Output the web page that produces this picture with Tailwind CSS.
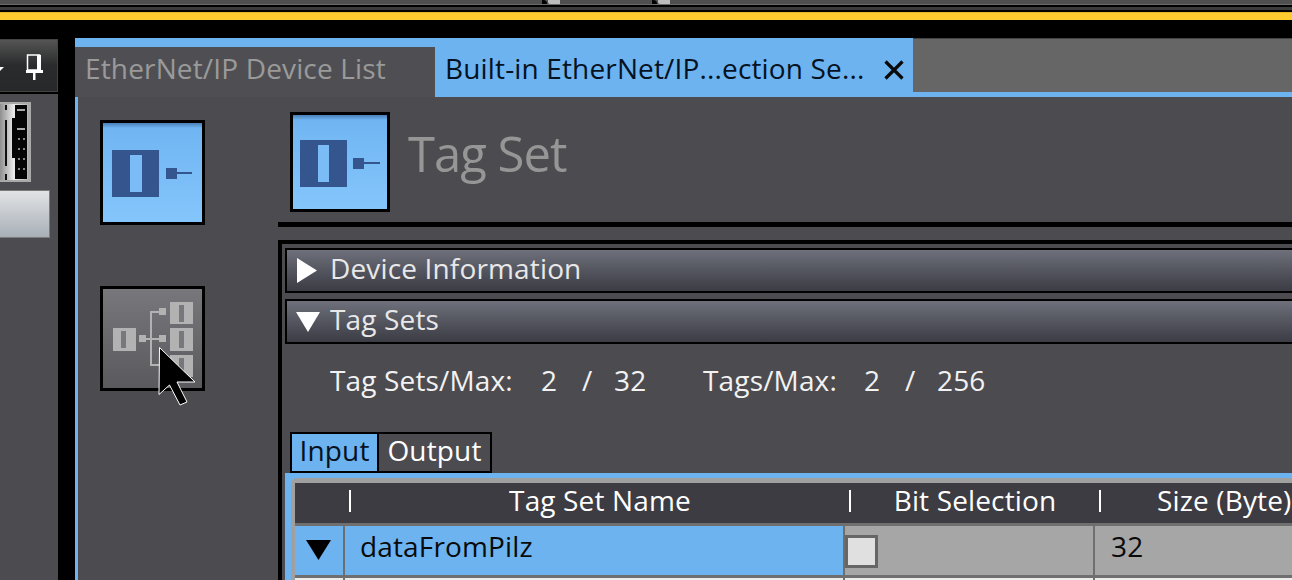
<!DOCTYPE html>
<html lang="en">
<head>
  <meta charset="UTF-8" />
  <title>Tag Set</title>
  <script src="https://cdn.jsdelivr.net/npm/@tailwindcss/browser@4"></script>
</head>
<body class="bg-black">
<div class="relative w-[1292px] h-[580px] overflow-hidden bg-black font-['Open_Sans',sans-serif] text-[28px] tracking-[0.15px]">

  <!-- Top window strip -->
  <div class="h-[12px] flex flex-col">
    <div class="h-[4px] flex bg-[#4f4f4f]">
      <div class="w-[542px]"></div>
      <div class="w-[5px] bg-black rounded-tr-[4px]"></div>
      <div class="w-px"></div>
      <div class="w-[12px] bg-[#bcbcbc] rounded-bl-[2px]"></div>
      <div class="w-[92px]"></div>
      <div class="w-[5px] bg-black rounded-tr-[4px]"></div>
      <div class="w-px"></div>
      <div class="w-[12px] bg-[#bcbcbc] rounded-bl-[2px]"></div>
    </div>
    <div class="h-px bg-[#6a6a6a]"></div>
    <div class="h-[2px] bg-black"></div>
    <div class="h-[3px] bg-[#3c3c3c]"></div>
    <div class="h-[2px] bg-black"></div>
  </div>
  <div class="h-[8px] bg-[#fdca30] border-t border-[#e6b62a]"></div>
  <div class="h-[18px]"></div>

  <div class="flex h-[542px]">
    <!-- Left docked pane -->
    <div class="w-[58px] mt-px flex flex-col bg-[#4c4b4f]">
      <div class="h-[53px] bg-gradient-to-b from-[#555555] via-[#2a2b2c] to-[#26282a] border border-l-0 border-[#444444] flex items-start">
        <svg class="mt-[14px]" width="57" height="28" viewBox="0 0 57 28">
          <path d="M0 13h4l-4 4z" fill="#fff"/>
          <path d="M27.500 1h12v15h-12z" fill="none" stroke="#fff" stroke-width="1.500"/>
          <path d="M37 1h4v15h-4zM26 16h17v3H26zM33 19h2.500v7H33z" fill="#fff"/>
        </svg>
      </div>
      <div class="h-[2px] bg-black"></div>
      <div class="h-[8px]"></div>
      <svg width="31" height="80" viewBox="0 0 31 80" class="block">
        <defs><linearGradient id="silver" x1="0" x2="1" y1="0" y2="0"><stop offset="0" stop-color="#8f8f8f"/><stop offset="0.5" stop-color="#ececec"/><stop offset="1" stop-color="#b5b5b5"/></linearGradient></defs>
        <rect width="31" height="80" fill="#a9a9a9"/>
        <rect y="2" width="28" height="76" fill="url(#silver)"/>
        <path d="M5 3h2v5H5zM5 18h2v46H5zM5 72h2v6H5z" fill="#111"/>
        <path d="M15 3h12v74H15zM12 16h4v40h-4z" fill="#050505"/>
        <path d="M17 7h8v2h-8zM17 26h8v2h-8z" fill="#aaa"/>
        <path d="M18 36h2v2h-2zM23 36h2v2h-2zM18 46h2v2h-2zM23 46h2v2h-2zM18 56h2v2h-2zM23 56h2v2h-2zM18 66h2v2h-2zM23 66h2v2h-2z" fill="#888"/>
      </svg>
      <div class="h-[8px]"></div>
      <div class="w-[50px] h-[48px] bg-gradient-to-b from-[#e2e3e5] to-[#a8afb7] border border-l-0 border-[#7b7b7b]"></div>
    </div>
    <div class="w-[17px]"></div>

    <!-- Main document -->
    <div class="flex-1 min-w-0 flex flex-col bg-[#4c4b4f]">
      <div class="h-[59px] flex">
        <div class="w-[360px] border-t-[9px] border-[#6db3f0] bg-[#4f4f53] text-[#9a9a9a] pl-[10px] leading-[42px]">EtherNet/IP Device List</div>
        <div class="w-[478px] bg-[#6db3f0] text-[#06121f] flex pl-[10px] pt-[9px] leading-[42px]">
          <span class="w-[439px] whitespace-nowrap">Built-in EtherNet/IP...ection Se...</span>
          <svg class="mt-[13px]" width="20" height="20" viewBox="0 0 20 20"><path d="M1.500 1.500l17 17M18.500 1.500l-17 17" stroke="#0a0a0a" stroke-width="3.200"/></svg>
        </div>
        <div class="flex-1 bg-[#666666] border-t border-[#444444] border-b-[5px] border-b-[#6db3f0]"></div>
      </div>

      <div class="flex-1 min-h-0 flex border-l-[3px] border-[#6db3f0]">
        <!-- Side buttons -->
        <div class="w-[200px] shrink-0 pl-[22px] pt-[23px] flex flex-col gap-[61px]">
          <div class="w-[105px] h-[105px] border-[3px] border-black bg-gradient-to-b from-[#6fb4f2] to-[#84c5fb]">
            <div class="h-[5px] bg-gradient-to-b from-[#4b80b8] to-[#6fb4f2]"></div>
            <svg width="99" height="94" viewBox="0 0 99 94" class="block">
              <path d="M9 22h47v47H9zM63 40h11v11H63zM74 44h15v2H74z" fill="#35558f"/>
              <rect x="27" y="27" width="12" height="37" fill="#7cbcf6"/>
            </svg>
          </div>
          <div class="w-[105px] h-[105px] border-[3px] border-black bg-gradient-to-b from-[#78787c] to-[#5a595e]">
            <svg width="99" height="99" viewBox="0 0 99 99" class="block">
              <g fill="#b2b2b2">
                <path d="M10 39h23v23H10zM36 46h7v7h-7zM56 46h7v7h-7zM56 19h7v7h-7zM67 13h23v22H67zM67 39h23v23H67zM67 66h23v22H67z"/>
                <path d="M43 49h13v2H43zM47 22h9v2h-9zM47 22h2v55h-2zM47 75h20v2H47z"/>
              </g>
              <path d="M18 42h5v17h-5zM76 16h5v17h-5zM76 42h5v17h-5zM76 69h5v17h-5z" fill="#78787c"/>
            </svg>
          </div>
        </div>

        <!-- Content column -->
        <div class="flex-1 min-w-0 flex flex-col">
          <div class="h-[125px] shrink-0 flex pl-[12px] pt-[15px]">
            <div class="w-[100px] h-[100px] border-[3px] border-black bg-gradient-to-b from-[#6fb4f2] to-[#84c5fb]">
              <div class="h-[5px] bg-gradient-to-b from-[#4b80b8] to-[#6fb4f2]"></div>
              <svg width="94" height="89" viewBox="0 0 94 89" class="block">
                <path d="M7 20h47v47H7zM60 38h11v11H60zM71 42h16v2H71z" fill="#35558f"/>
                <rect x="25" y="25" width="11" height="37" fill="#7cbcf6"/>
              </svg>
            </div>
            <div class="ml-[18px] text-[49px] leading-[83px] text-[#969696] tracking-[-1px]">Tag Set</div>
          </div>
          <div class="h-[5px] shrink-0 bg-black"></div>
          <div class="h-[13px] shrink-0"></div>

          <div class="flex-1 min-h-0 border-t-4 border-l-4 border-black pl-[3px] pt-[4px] flex flex-col">
            <div class="h-[45px] shrink-0 border-2 border-black border-r-0 bg-gradient-to-b from-[#6e707b] to-[#3b3c44] flex items-center text-[#e8e8e8]">
              <svg class="ml-[10px]" width="20" height="25" viewBox="0 0 20 25"><path d="M0 0l20 12.500L0 25z" fill="#fff"/></svg>
              <span class="ml-[13px] pb-[5px]">Device Information</span>
            </div>
            <div class="h-[6px] shrink-0"></div>
            <div class="h-[45px] shrink-0 border-2 border-black border-r-0 bg-gradient-to-b from-[#6e707b] to-[#3b3c44] flex items-center text-[#e8e8e8]">
              <svg class="ml-[9px]" width="24" height="20" viewBox="0 0 24 20"><path d="M0 0h24L12 20z" fill="#fff"/></svg>
              <span class="ml-[10px] pb-[5px]">Tag Sets</span>
            </div>

            <div class="h-[74px] shrink-0 flex items-center pl-[45px] pb-[2px] text-[#f2f2f2]">
              <span class="w-[211px]">Tag Sets/Max:</span>
              <span class="w-[41px]">2</span>
              <span class="w-[32px]">/</span>
              <span class="w-[89px]">32</span>
              <span class="w-[161px]">Tags/Max:</span>
              <span class="w-[41px]">2</span>
              <span class="w-[32px]">/</span>
              <span>256</span>
            </div>
            <div class="h-[14px] shrink-0"></div>

            <div class="h-[41px] shrink-0 ml-[5px] w-[202px] bg-black p-[2px] flex gap-[2px]">
              <div class="w-[85px] bg-[#6db3f0] text-[#06121f] text-center leading-[33px]">Input</div>
              <div class="w-[111px] bg-[#4c4c50] text-white text-center leading-[33px]">Output</div>
            </div>

            <!-- Tag table -->
            <div class="flex-1 min-h-0 bg-[#6db3f0] pt-[5px] pl-[6px]">
              <div class="bg-[#a0a0a0] pt-[5px] pl-[4px] rounded-tl-[6px] h-full overflow-hidden">
                <div class="h-[40px] grid grid-cols-[50px_500px_250px_250px] bg-[#3c3c42] text-white leading-[34px]">
                  <div class="relative"><span class="absolute right-[-6px] top-[7px] h-[22px] w-[2px] bg-white"></span></div>
                  <div class="relative text-center pl-[10px]">Tag Set Name<span class="absolute right-[-6px] top-[7px] h-[22px] w-[2px] bg-white"></span></div>
                  <div class="relative text-center pl-[10px]">Bit Selection<span class="absolute right-[-6px] top-[7px] h-[22px] w-[2px] bg-white"></span></div>
                  <div class="text-left pl-[62px] whitespace-nowrap">Size (Byte)</div>
                </div>
                <div class="h-[3px] bg-[#6f6f6f]"></div>
                <div class="h-[49px] grid grid-cols-[48px_2px_498px_2px_248px_2px_250px] text-[#0a0a0a]">
                  <div class="bg-[#6db3f0] pl-[11px] pt-[14px]"><svg class="block" width="25" height="20" viewBox="0 0 25 20"><path d="M0 0h25L12.500 20z" fill="#000"/></svg></div>
                  <div class="bg-[#6f6f6f]"></div>
                  <div class="bg-[#6db3f0] pl-[15px] leading-[41px]">dataFromPilz</div>
                  <div class="bg-[#6f6f6f]"></div>
                  <div class="bg-[#a6a6a6] pt-[9px]"><div class="w-[33px] h-[33px] bg-[#e0e0e0] border-[3px] border-[#666666]"></div></div>
                  <div class="bg-[#6f6f6f]"></div>
                  <div class="bg-[#a6a6a6] pl-[16px] leading-[41px]">32</div>
                </div>
                <div class="h-[3px] bg-[#6f6f6f]"></div>
                <div class="h-[10px] grid grid-cols-[48px_2px_498px_2px_248px_2px_250px]">
                  <div class="bg-[#ececec]"></div><div class="bg-[#6f6f6f]"></div><div class="bg-[#ececec]"></div><div class="bg-[#6f6f6f]"></div><div class="bg-[#ececec]"></div><div class="bg-[#6f6f6f]"></div><div class="bg-[#ececec]"></div>
                </div>
              </div>
            </div>
          </div>
        </div>
      </div>
    </div>
  </div>

  <!-- Mouse pointer -->
  <svg class="absolute left-[155px] top-[343px]" width="46" height="66" viewBox="155 343 46 66">
    <path d="M159.500 347.500L195 382h-18l10 20-7 3-10.500-20-10.500 9.500z" fill="#000" stroke="#fff" stroke-width="1"/>
  </svg>
</div>
</body>
</html>
